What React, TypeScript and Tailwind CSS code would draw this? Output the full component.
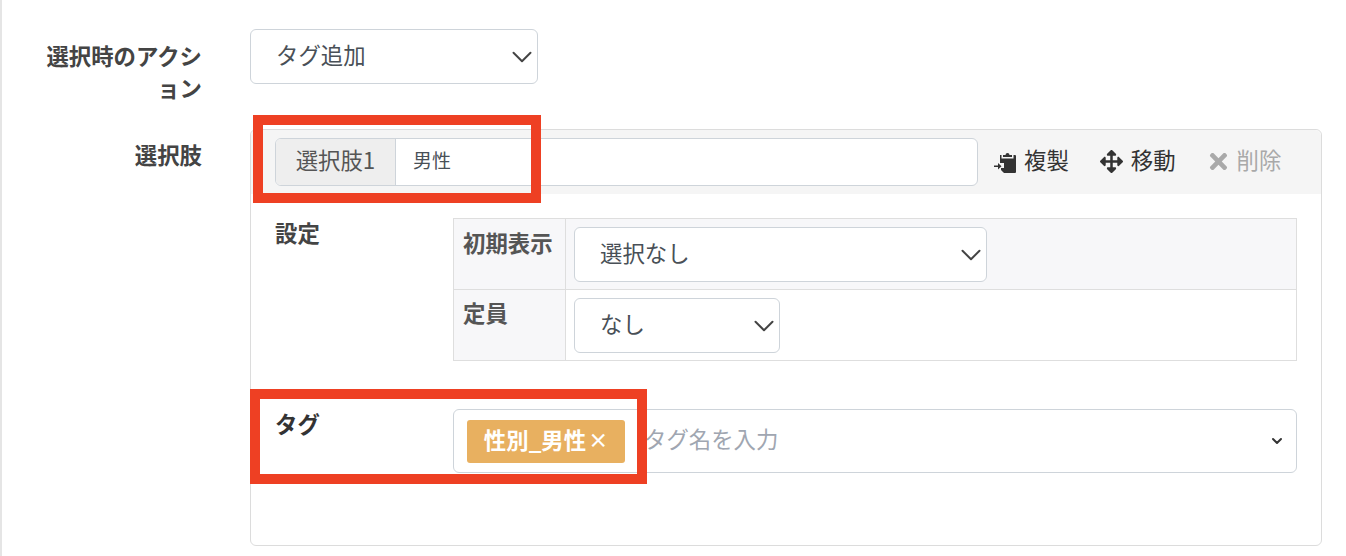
import { ChevronDown } from 'lucide-react'
import { FaArrowsAlt, FaTimes } from 'react-icons/fa'

const font = 'font-["Noto_Sans_CJK_JP","Noto_Sans",sans-serif]'

function PasteIcon() {
  return (
    <svg viewBox="0 0 24 24" className="h-[24px] w-[24px] text-[#333]" fill="currentColor">
      <path d="M7 5h1.500v3.500h12V5H22a1 1 0 0 1 1 1v16a1 1 0 0 1-1 1H11l-3-3v-2h3v-5H7V5Z" />
      <path d="M10 5h2.500a2 2 0 0 1 4 0H19v2h-9V5Z" />
      <path d="M1 15.500h4V13l3.500 3.200L5 19.400V17H1v-1.500Z" />
    </svg>
  )
}

function SelectBox({ label, className }: { label: string; className: string }) {
  return (
    <div className={`flex h-[55px] items-center justify-between rounded-md border border-[#ced4da] bg-white pl-[25px] text-[22.400px] text-[#495057] ${className}`}>
      <span className="pb-[3px]">{label}</span>
      <ChevronDown className="-mr-[2px] h-[34px] w-[34px] text-[#444]" strokeWidth={1.4} />
    </div>
  )
}

export default function App() {
  return (
    <div className={`relative h-[556px] w-[1346px] overflow-hidden bg-white text-[#333] ${font}`}>
      <div className="h-full border-l-2 border-[#e5e5e5] pt-[29px]">
        <div className="flex">
          <div className="ml-[44px] w-[156px] pt-[10px] text-right text-[22.400px] font-bold leading-[32px] text-[#444]">
            選択時のアクション
          </div>
          <div className="ml-[48px]">
            <SelectBox label="タグ追加" className="w-[288px]" />
          </div>
        </div>

        <div className="mt-[26px] flex">
          <div className="ml-[44px] w-[156px] pt-[9px] text-right text-[22.400px] font-bold leading-[32px] text-[#444]">
            選択肢
          </div>
          <div className="ml-[48px] h-[417px] w-[1072px] rounded-md border border-[#dcdcdc] bg-white">
            <div className="flex h-[64px] items-center rounded-t-md bg-[#f5f5f5] pl-[24px]">
              <div className="flex h-[48px] w-[703px] overflow-hidden rounded-md border border-[#ced4da] bg-white">
                <div className="flex w-[120px] items-center justify-center border-r border-[#ced4da] bg-[#eeeeee] pb-[4px] text-[22.400px] text-[#555]">
                  選択肢1
                </div>
                <div className="flex items-center pb-[3px] pl-[17px] text-[19px] text-[#495057]">男性</div>
              </div>
              <div className="ml-[15px] flex items-center gap-[7px] text-[22.400px] text-[#333]">
                <PasteIcon />
                <span className="pb-[4px]">複製</span>
              </div>
              <div className="ml-[31px] flex items-center gap-[8px] text-[22.400px] text-[#333]">
                <FaArrowsAlt className="h-[23px] w-[23px]" />
                <span className="pb-[4px]">移動</span>
              </div>
              <div className="ml-[30px] flex items-center gap-[6px] text-[22.400px] text-[#a9a9a9]">
                <FaTimes className="h-[25px] w-[25px]" />
                <span className="pb-[4px]">削除</span>
              </div>
            </div>

            <div className="flex px-[24px] pt-[24px]">
              <div className="-mt-[2px] w-[178px] text-[22.400px] font-bold leading-[32px] text-[#444]">設定</div>
              <div className="w-[844px] border border-[#dedede]">
                <div className="flex h-[71px] border-b border-[#dedede] bg-[#f7f7f9]">
                  <div className="w-[112px] border-r border-[#dedede] pl-[9px] pt-[7px] text-[22.400px] font-bold leading-[32px] text-[#555]">
                    初期表示
                  </div>
                  <div className="pl-[8px] pt-[8px]">
                    <SelectBox label="選択なし" className="w-[413px]" />
                  </div>
                </div>
                <div className="flex h-[70px]">
                  <div className="w-[112px] border-r border-[#dedede] bg-[#f7f7f9] pl-[9px] pt-[6px] text-[22.400px] font-bold leading-[32px] text-[#555]">
                    定員
                  </div>
                  <div className="pl-[8px] pt-[8px]">
                    <SelectBox label="なし" className="w-[206px]" />
                  </div>
                </div>
              </div>
            </div>

            <div className="flex px-[24px] pt-[48px]">
              <div className="-mt-[2px] w-[178px] text-[22.400px] font-bold leading-[32px] text-[#333]">タグ</div>
              <div className="flex h-[64px] w-[844px] items-center rounded-md border border-[#ced4da] bg-white pl-[13px] pr-[11px]">
                <div className="flex h-[43px] w-[158px] items-center justify-center gap-[2px] rounded-[3px] bg-[#e8b060] pb-[3px] text-[22.400px] font-bold text-white">
                  性別_男性
                  <span className="text-[20px]">×</span>
                </div>
                <span className="ml-[19px] flex-1 pb-[5px] text-[22.400px] text-[#a0a6b1]">タグ名を入力</span>
                <ChevronDown className="h-[16px] w-[16px] text-[#333]" strokeWidth={3} />
              </div>
            </div>
          </div>
        </div>
      </div>

      <div className="absolute left-[253px] top-[115px] h-[88px] w-[288px] border-[10px] border-[#ee4023]" />
      <div className="absolute left-[250px] top-[389px] h-[95px] w-[397px] border-[10px] border-[#ee4023]" />
    </div>
  )
}
